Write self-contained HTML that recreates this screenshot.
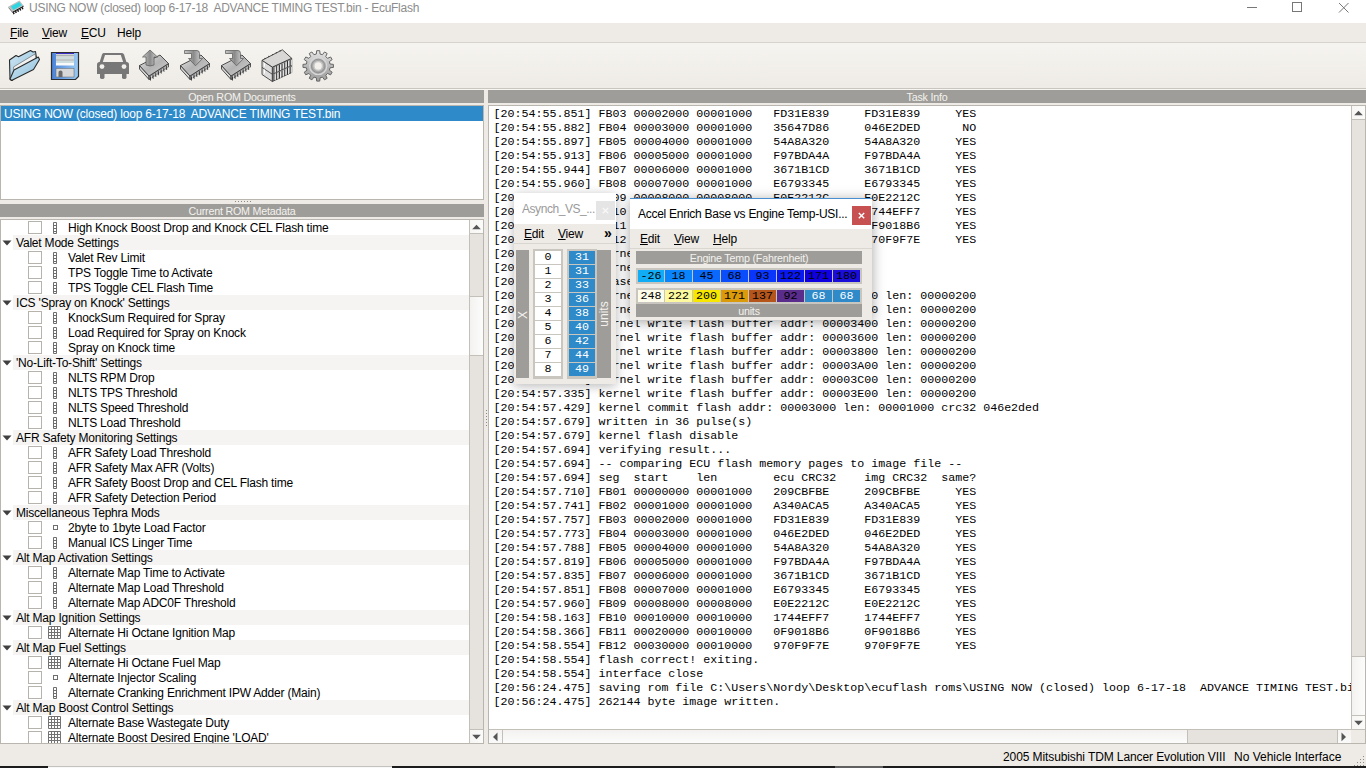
<!DOCTYPE html>
<html><head><meta charset="utf-8"><title>EcuFlash</title><style>
*{margin:0;padding:0;box-sizing:border-box}
html,body{width:1366px;height:768px;overflow:hidden;background:#eeebe6;font-family:"Liberation Sans", sans-serif;font-size:12px;color:#000}
.a{position:absolute}
.t{position:absolute;white-space:pre;line-height:15px;margin-top:1px;letter-spacing:-0.2px}
.mono{font-family:"Liberation Mono", monospace;white-space:pre}
u{text-decoration:none;border-bottom:1px solid currentColor}
</style></head>
<body>
<div class="a" style="left:0;top:0;width:1366px;height:23px;background:#fff"></div><svg class="a" style="left:4px;top:0px" width="24" height="16" viewBox="0 0 24 16">
<path d="M4.5,6.5 L8.5,11.5 L8.5,13 L4.5,8 Z" fill="#777"/>
<path d="M8.5,11.5 L19.5,5.5 L19.5,7 L8.5,13 Z" fill="#222"/>
<path d="M9.3,12.3 l0.8,1.8 M11.5,11.1 l0.8,1.8 M13.7,9.9 l0.8,1.8 M15.9,8.7 l0.8,1.8 M18.1,7.5 l0.8,1.8" stroke="#111" stroke-width="1.4"/>
<path d="M4.5,6.5 L15.5,0.5 L19.5,5.5 L8.5,11.5 Z" fill="#bcc0c0"/>
<path d="M7,6.6 L15.3,2 L17.8,5.3 L9.4,9.9 Z" fill="#2fd6e2"/>
</svg><div class="t" style="left:29px;top:0px;color:#8c8c8c;letter-spacing:-0.27px">USING NOW (closed) loop 6-17-18  ADVANCE TIMING TEST.bin - EcuFlash</div><div class="a" style="left:1247px;top:7px;width:10px;height:1px;background:#777"></div><div class="a" style="left:1292px;top:2px;width:10px;height:10px;border:1px solid #777"></div><svg class="a" style="left:1338px;top:2px" width="11" height="11" viewBox="0 0 11 11"><path d="M1 1L10.5 10.5M10.5 1L1 10.5" stroke="#777" stroke-width="1"/></svg><div class="a" style="left:0;top:23px;width:1366px;height:20px;background:#eeebe6;border-bottom:1px solid #d6d2cc"></div><div class="t" style="left:10px;top:25px"><span style="text-decoration:underline;text-underline-offset:1px">F</span>ile</div><div class="t" style="left:42px;top:25px"><span style="text-decoration:underline;text-underline-offset:1px">V</span>iew</div><div class="t" style="left:81px;top:25px"><span style="text-decoration:underline;text-underline-offset:1px">E</span>CU</div><div class="t" style="left:117px;top:25px">Help</div><div class="a" style="left:0;top:43px;width:1366px;height:45px;background:linear-gradient(#f6f4f0,#eeebe6)"></div><div class="a" style="left:0;top:88px;width:1366px;height:1px;background:#c9c5bf"></div><div class="a" style="left:0;top:89px;width:1366px;height:1px;background:#f7f5f2"></div><div class="a" style="left:0px;top:90px;width:484px;height:13px;background:#9e9d99"></div><div class="t" style="left:0px;top:89px;width:484px;text-align:center;color:#f4f2ee;font-size:10.7px;letter-spacing:-0.2px">Open ROM Documents</div><div class="a" style="left:488px;top:90px;width:878px;height:13px;background:#9e9d99"></div><div class="t" style="left:488px;top:89px;width:878px;text-align:center;color:#f4f2ee;font-size:10.7px;letter-spacing:-0.2px">Task Info</div><div class="a" style="left:0;top:105px;width:484px;height:95px;background:#fff;border:1px solid #b9b5af"></div><div class="a" style="left:1px;top:106px;width:482px;height:15px;background:#2e8ac8"></div><div class="t" style="left:4px;top:106px;color:#fff">USING NOW (closed) loop 6-17-18  ADVANCE TIMING TEST.bin</div><div class="a" style="left:235px;top:201px;width:1px;height:1px;background:#8a8680"></div><div class="a" style="left:238px;top:201px;width:1px;height:1px;background:#8a8680"></div><div class="a" style="left:241px;top:201px;width:1px;height:1px;background:#8a8680"></div><div class="a" style="left:244px;top:201px;width:1px;height:1px;background:#8a8680"></div><div class="a" style="left:247px;top:201px;width:1px;height:1px;background:#8a8680"></div><div class="a" style="left:250px;top:201px;width:1px;height:1px;background:#8a8680"></div><div class="a" style="left:0px;top:204px;width:484px;height:13px;background:#9e9d99"></div><div class="t" style="left:0px;top:203px;width:484px;text-align:center;color:#f4f2ee;font-size:10.7px;letter-spacing:-0.2px">Current ROM Metadata</div><div class="a" style="left:0;top:219px;width:484px;height:525px;background:#fff;border:1px solid #b9b5af"></div><div class="a" style="left:1px;top:220px;width:468px;height:523px;overflow:hidden"><div class="a" style="left:27px;top:1px;width:14px;height:13px;border:1px solid #b6b2ac;background:#fff"></div><svg class="a" style="left:51px;top:1px" width="6" height="14" viewBox="0 0 6 14"><path d="M1.5 1.5h3v11h-3zM1.5 4.5h3M1.5 7.5h3M1.5 10.5h3" fill="none" stroke="#6e6e6e" stroke-width="1"/></svg><div class="t" style="left:67px;top:0px">High Knock Boost Drop and Knock CEL Flash time</div><div class="a" style="left:12px;top:15px;width:456px;height:15px;background:#f5f4f2"></div><svg class="a" style="left:1px;top:20px" width="10" height="6" viewBox="0 0 10 6"><path d="M0.5 0.5H9.5L5 5.5Z" fill="#404040"/></svg><div class="t" style="left:15px;top:15px">Valet Mode Settings</div><div class="a" style="left:27px;top:31px;width:14px;height:13px;border:1px solid #b6b2ac;background:#fff"></div><svg class="a" style="left:51px;top:31px" width="6" height="14" viewBox="0 0 6 14"><path d="M1.5 1.5h3v11h-3zM1.5 4.5h3M1.5 7.5h3M1.5 10.5h3" fill="none" stroke="#6e6e6e" stroke-width="1"/></svg><div class="t" style="left:67px;top:30px">Valet Rev Limit</div><div class="a" style="left:27px;top:46px;width:14px;height:13px;border:1px solid #b6b2ac;background:#fff"></div><svg class="a" style="left:51px;top:46px" width="6" height="14" viewBox="0 0 6 14"><path d="M1.5 1.5h3v11h-3zM1.5 4.5h3M1.5 7.5h3M1.5 10.5h3" fill="none" stroke="#6e6e6e" stroke-width="1"/></svg><div class="t" style="left:67px;top:45px">TPS Toggle Time to Activate</div><div class="a" style="left:27px;top:61px;width:14px;height:13px;border:1px solid #b6b2ac;background:#fff"></div><svg class="a" style="left:51px;top:61px" width="6" height="14" viewBox="0 0 6 14"><path d="M1.5 1.5h3v11h-3zM1.5 4.5h3M1.5 7.5h3M1.5 10.5h3" fill="none" stroke="#6e6e6e" stroke-width="1"/></svg><div class="t" style="left:67px;top:60px">TPS Toggle CEL Flash Time</div><div class="a" style="left:12px;top:75px;width:456px;height:15px;background:#f5f4f2"></div><svg class="a" style="left:1px;top:80px" width="10" height="6" viewBox="0 0 10 6"><path d="M0.5 0.5H9.5L5 5.5Z" fill="#404040"/></svg><div class="t" style="left:15px;top:75px">ICS &#x27;Spray on Knock&#x27; Settings</div><div class="a" style="left:27px;top:91px;width:14px;height:13px;border:1px solid #b6b2ac;background:#fff"></div><svg class="a" style="left:51px;top:91px" width="6" height="14" viewBox="0 0 6 14"><path d="M1.5 1.5h3v11h-3zM1.5 4.5h3M1.5 7.5h3M1.5 10.5h3" fill="none" stroke="#6e6e6e" stroke-width="1"/></svg><div class="t" style="left:67px;top:90px">KnockSum Required for Spray</div><div class="a" style="left:27px;top:106px;width:14px;height:13px;border:1px solid #b6b2ac;background:#fff"></div><svg class="a" style="left:51px;top:106px" width="6" height="14" viewBox="0 0 6 14"><path d="M1.5 1.5h3v11h-3zM1.5 4.5h3M1.5 7.5h3M1.5 10.5h3" fill="none" stroke="#6e6e6e" stroke-width="1"/></svg><div class="t" style="left:67px;top:105px">Load Required for Spray on Knock</div><div class="a" style="left:27px;top:121px;width:14px;height:13px;border:1px solid #b6b2ac;background:#fff"></div><svg class="a" style="left:51px;top:121px" width="6" height="14" viewBox="0 0 6 14"><path d="M1.5 1.5h3v11h-3zM1.5 4.5h3M1.5 7.5h3M1.5 10.5h3" fill="none" stroke="#6e6e6e" stroke-width="1"/></svg><div class="t" style="left:67px;top:120px">Spray on Knock time</div><div class="a" style="left:12px;top:135px;width:456px;height:15px;background:#f5f4f2"></div><svg class="a" style="left:1px;top:140px" width="10" height="6" viewBox="0 0 10 6"><path d="M0.5 0.5H9.5L5 5.5Z" fill="#404040"/></svg><div class="t" style="left:15px;top:135px">&#x27;No-Lift-To-Shift&#x27; Settings</div><div class="a" style="left:27px;top:151px;width:14px;height:13px;border:1px solid #b6b2ac;background:#fff"></div><svg class="a" style="left:51px;top:151px" width="6" height="14" viewBox="0 0 6 14"><path d="M1.5 1.5h3v11h-3zM1.5 4.5h3M1.5 7.5h3M1.5 10.5h3" fill="none" stroke="#6e6e6e" stroke-width="1"/></svg><div class="t" style="left:67px;top:150px">NLTS RPM Drop</div><div class="a" style="left:27px;top:166px;width:14px;height:13px;border:1px solid #b6b2ac;background:#fff"></div><svg class="a" style="left:51px;top:166px" width="6" height="14" viewBox="0 0 6 14"><path d="M1.5 1.5h3v11h-3zM1.5 4.5h3M1.5 7.5h3M1.5 10.5h3" fill="none" stroke="#6e6e6e" stroke-width="1"/></svg><div class="t" style="left:67px;top:165px">NLTS TPS Threshold</div><div class="a" style="left:27px;top:181px;width:14px;height:13px;border:1px solid #b6b2ac;background:#fff"></div><svg class="a" style="left:51px;top:181px" width="6" height="14" viewBox="0 0 6 14"><path d="M1.5 1.5h3v11h-3zM1.5 4.5h3M1.5 7.5h3M1.5 10.5h3" fill="none" stroke="#6e6e6e" stroke-width="1"/></svg><div class="t" style="left:67px;top:180px">NLTS Speed Threshold</div><div class="a" style="left:27px;top:196px;width:14px;height:13px;border:1px solid #b6b2ac;background:#fff"></div><svg class="a" style="left:51px;top:196px" width="6" height="14" viewBox="0 0 6 14"><path d="M1.5 1.5h3v11h-3zM1.5 4.5h3M1.5 7.5h3M1.5 10.5h3" fill="none" stroke="#6e6e6e" stroke-width="1"/></svg><div class="t" style="left:67px;top:195px">NLTS Load Threshold</div><div class="a" style="left:12px;top:210px;width:456px;height:15px;background:#f5f4f2"></div><svg class="a" style="left:1px;top:215px" width="10" height="6" viewBox="0 0 10 6"><path d="M0.5 0.5H9.5L5 5.5Z" fill="#404040"/></svg><div class="t" style="left:15px;top:210px">AFR Safety Monitoring Settings</div><div class="a" style="left:27px;top:226px;width:14px;height:13px;border:1px solid #b6b2ac;background:#fff"></div><svg class="a" style="left:51px;top:226px" width="6" height="14" viewBox="0 0 6 14"><path d="M1.5 1.5h3v11h-3zM1.5 4.5h3M1.5 7.5h3M1.5 10.5h3" fill="none" stroke="#6e6e6e" stroke-width="1"/></svg><div class="t" style="left:67px;top:225px">AFR Safety Load Threshold</div><div class="a" style="left:27px;top:241px;width:14px;height:13px;border:1px solid #b6b2ac;background:#fff"></div><svg class="a" style="left:51px;top:241px" width="6" height="14" viewBox="0 0 6 14"><path d="M1.5 1.5h3v11h-3zM1.5 4.5h3M1.5 7.5h3M1.5 10.5h3" fill="none" stroke="#6e6e6e" stroke-width="1"/></svg><div class="t" style="left:67px;top:240px">AFR Safety Max AFR (Volts)</div><div class="a" style="left:27px;top:256px;width:14px;height:13px;border:1px solid #b6b2ac;background:#fff"></div><svg class="a" style="left:51px;top:256px" width="6" height="14" viewBox="0 0 6 14"><path d="M1.5 1.5h3v11h-3zM1.5 4.5h3M1.5 7.5h3M1.5 10.5h3" fill="none" stroke="#6e6e6e" stroke-width="1"/></svg><div class="t" style="left:67px;top:255px">AFR Safety Boost Drop and CEL Flash time</div><div class="a" style="left:27px;top:271px;width:14px;height:13px;border:1px solid #b6b2ac;background:#fff"></div><svg class="a" style="left:51px;top:271px" width="6" height="14" viewBox="0 0 6 14"><path d="M1.5 1.5h3v11h-3zM1.5 4.5h3M1.5 7.5h3M1.5 10.5h3" fill="none" stroke="#6e6e6e" stroke-width="1"/></svg><div class="t" style="left:67px;top:270px">AFR Safety Detection Period</div><div class="a" style="left:12px;top:285px;width:456px;height:15px;background:#f5f4f2"></div><svg class="a" style="left:1px;top:290px" width="10" height="6" viewBox="0 0 10 6"><path d="M0.5 0.5H9.5L5 5.5Z" fill="#404040"/></svg><div class="t" style="left:15px;top:285px">Miscellaneous Tephra Mods</div><div class="a" style="left:27px;top:301px;width:14px;height:13px;border:1px solid #b6b2ac;background:#fff"></div><div class="a" style="left:52px;top:305px;width:5px;height:5px;border:1px solid #6e6e6e"></div><div class="t" style="left:67px;top:300px">2byte to 1byte Load Factor</div><div class="a" style="left:27px;top:316px;width:14px;height:13px;border:1px solid #b6b2ac;background:#fff"></div><svg class="a" style="left:51px;top:316px" width="6" height="14" viewBox="0 0 6 14"><path d="M1.5 1.5h3v11h-3zM1.5 4.5h3M1.5 7.5h3M1.5 10.5h3" fill="none" stroke="#6e6e6e" stroke-width="1"/></svg><div class="t" style="left:67px;top:315px">Manual ICS Linger Time</div><div class="a" style="left:12px;top:330px;width:456px;height:15px;background:#f5f4f2"></div><svg class="a" style="left:1px;top:335px" width="10" height="6" viewBox="0 0 10 6"><path d="M0.5 0.5H9.5L5 5.5Z" fill="#404040"/></svg><div class="t" style="left:15px;top:330px">Alt Map Activation Settings</div><div class="a" style="left:27px;top:346px;width:14px;height:13px;border:1px solid #b6b2ac;background:#fff"></div><svg class="a" style="left:51px;top:346px" width="6" height="14" viewBox="0 0 6 14"><path d="M1.5 1.5h3v11h-3zM1.5 4.5h3M1.5 7.5h3M1.5 10.5h3" fill="none" stroke="#6e6e6e" stroke-width="1"/></svg><div class="t" style="left:67px;top:345px">Alternate Map Time to Activate</div><div class="a" style="left:27px;top:361px;width:14px;height:13px;border:1px solid #b6b2ac;background:#fff"></div><svg class="a" style="left:51px;top:361px" width="6" height="14" viewBox="0 0 6 14"><path d="M1.5 1.5h3v11h-3zM1.5 4.5h3M1.5 7.5h3M1.5 10.5h3" fill="none" stroke="#6e6e6e" stroke-width="1"/></svg><div class="t" style="left:67px;top:360px">Alternate Map Load Threshold</div><div class="a" style="left:27px;top:376px;width:14px;height:13px;border:1px solid #b6b2ac;background:#fff"></div><svg class="a" style="left:51px;top:376px" width="6" height="14" viewBox="0 0 6 14"><path d="M1.5 1.5h3v11h-3zM1.5 4.5h3M1.5 7.5h3M1.5 10.5h3" fill="none" stroke="#6e6e6e" stroke-width="1"/></svg><div class="t" style="left:67px;top:375px">Alternate Map ADC0F Threshold</div><div class="a" style="left:12px;top:390px;width:456px;height:15px;background:#f5f4f2"></div><svg class="a" style="left:1px;top:395px" width="10" height="6" viewBox="0 0 10 6"><path d="M0.5 0.5H9.5L5 5.5Z" fill="#404040"/></svg><div class="t" style="left:15px;top:390px">Alt Map Ignition Settings</div><div class="a" style="left:27px;top:406px;width:14px;height:13px;border:1px solid #b6b2ac;background:#fff"></div><svg class="a" style="left:47px;top:406px" width="13" height="13" viewBox="0 0 13 13"><path d="M0.5 0.5h12v12h-12zM0.5 3.5h12M0.5 6.5h12M0.5 9.5h12M3.5 0.5v12M6.5 0.5v12M9.5 0.5v12" fill="none" stroke="#737373" stroke-width="1"/></svg><div class="t" style="left:67px;top:405px">Alternate Hi Octane Ignition Map</div><div class="a" style="left:12px;top:420px;width:456px;height:15px;background:#f5f4f2"></div><svg class="a" style="left:1px;top:425px" width="10" height="6" viewBox="0 0 10 6"><path d="M0.5 0.5H9.5L5 5.5Z" fill="#404040"/></svg><div class="t" style="left:15px;top:420px">Alt Map Fuel Settings</div><div class="a" style="left:27px;top:436px;width:14px;height:13px;border:1px solid #b6b2ac;background:#fff"></div><svg class="a" style="left:47px;top:436px" width="13" height="13" viewBox="0 0 13 13"><path d="M0.5 0.5h12v12h-12zM0.5 3.5h12M0.5 6.5h12M0.5 9.5h12M3.5 0.5v12M6.5 0.5v12M9.5 0.5v12" fill="none" stroke="#737373" stroke-width="1"/></svg><div class="t" style="left:67px;top:435px">Alternate Hi Octane Fuel Map</div><div class="a" style="left:27px;top:451px;width:14px;height:13px;border:1px solid #b6b2ac;background:#fff"></div><div class="a" style="left:52px;top:455px;width:5px;height:5px;border:1px solid #6e6e6e"></div><div class="t" style="left:67px;top:450px">Alternate Injector Scaling</div><div class="a" style="left:27px;top:466px;width:14px;height:13px;border:1px solid #b6b2ac;background:#fff"></div><svg class="a" style="left:51px;top:466px" width="6" height="14" viewBox="0 0 6 14"><path d="M1.5 1.5h3v11h-3zM1.5 4.5h3M1.5 7.5h3M1.5 10.5h3" fill="none" stroke="#6e6e6e" stroke-width="1"/></svg><div class="t" style="left:67px;top:465px">Alternate Cranking Enrichment IPW Adder (Main)</div><div class="a" style="left:12px;top:480px;width:456px;height:15px;background:#f5f4f2"></div><svg class="a" style="left:1px;top:485px" width="10" height="6" viewBox="0 0 10 6"><path d="M0.5 0.5H9.5L5 5.5Z" fill="#404040"/></svg><div class="t" style="left:15px;top:480px">Alt Map Boost Control Settings</div><div class="a" style="left:27px;top:496px;width:14px;height:13px;border:1px solid #b6b2ac;background:#fff"></div><svg class="a" style="left:47px;top:496px" width="13" height="13" viewBox="0 0 13 13"><path d="M0.5 0.5h12v12h-12zM0.5 3.5h12M0.5 6.5h12M0.5 9.5h12M3.5 0.5v12M6.5 0.5v12M9.5 0.5v12" fill="none" stroke="#737373" stroke-width="1"/></svg><div class="t" style="left:67px;top:495px">Alternate Base Wastegate Duty</div><div class="a" style="left:27px;top:511px;width:14px;height:13px;border:1px solid #b6b2ac;background:#fff"></div><svg class="a" style="left:47px;top:511px" width="13" height="13" viewBox="0 0 13 13"><path d="M0.5 0.5h12v12h-12zM0.5 3.5h12M0.5 6.5h12M0.5 9.5h12M3.5 0.5v12M6.5 0.5v12M9.5 0.5v12" fill="none" stroke="#737373" stroke-width="1"/></svg><div class="t" style="left:67px;top:510px">Alternate Boost Desired Engine &#x27;LOAD&#x27;</div></div><div class="a" style="left:469px;top:220px;width:14px;height:523px;background:#e6e3df;border-left:1px solid #c3bfb9"></div><div class="a" style="left:470px;top:220px;width:13px;height:14px;background:linear-gradient(90deg,#f7f6f4,#fbfbfa);border-bottom:1px solid #c3bfb9"></div><svg class="a" style="left:472px;top:224px" width="9" height="6" viewBox="0 0 9 6"><path d="M0.2 5.2H8.8L4.5 0.8Z" fill="#555"/></svg><div class="a" style="left:470px;top:729px;width:13px;height:14px;background:linear-gradient(90deg,#f7f6f4,#fbfbfa);border-top:1px solid #c3bfb9"></div><svg class="a" style="left:472px;top:734px" width="9" height="6" viewBox="0 0 9 6"><path d="M0.2 0.8H8.8L4.5 5.2Z" fill="#555"/></svg><div class="a" style="left:470px;top:296px;width:13px;height:60px;background:linear-gradient(90deg,#f3f2f0,#fcfcfc);border-top:1px solid #c3bfb9;border-bottom:1px solid #c3bfb9"></div><div class="a" style="left:488px;top:105px;width:878px;height:639px;background:#fff;border:1px solid #b9b5af"></div><div class="a" style="left:489px;top:106px;width:862px;height:623px;overflow:hidden"><div class="a mono" style="left:4.5px;top:1px;font-size:11.67px;line-height:14px;color:#000">[20:54:55.851] FB03 00002000 00001000   FD31E839     FD31E839     YES
[20:54:55.882] FB04 00003000 00001000   35647D86     046E2DED      NO
[20:54:55.897] FB05 00004000 00001000   54A8A320     54A8A320     YES
[20:54:55.913] FB06 00005000 00001000   F97BDA4A     F97BDA4A     YES
[20:54:55.944] FB07 00006000 00001000   3671B1CD     3671B1CD     YES
[20:54:55.960] FB08 00007000 00001000   E6793345     E6793345     YES
[20:54:55.991] FB09 00008000 00008000   E0E2212C     E0E2212C     YES
[20:54:56.194] FB10 00010000 00010000   1744EFF7     1744EFF7     YES
[20:54:56.397] FB11 00020000 00010000   0F9018B6     0F9018B6     YES
[20:54:56.600] FB12 00030000 00010000   970F9F7E     970F9F7E     YES
[20:54:56.616] kernel flash enable
[20:54:56.631] kernel flash erase
[20:54:56.772] erase complete
[20:54:56.850] kernel write flash buffer addr: 00003000 len: 00000200
[20:54:56.928] kernel write flash buffer addr: 00003200 len: 00000200
[20:54:57.007] kernel write flash buffer addr: 00003400 len: 00000200
[20:54:57.085] kernel write flash buffer addr: 00003600 len: 00000200
[20:54:57.163] kernel write flash buffer addr: 00003800 len: 00000200
[20:54:57.194] kernel write flash buffer addr: 00003A00 len: 00000200
[20:54:57.272] kernel write flash buffer addr: 00003C00 len: 00000200
[20:54:57.335] kernel write flash buffer addr: 00003E00 len: 00000200
[20:54:57.429] kernel commit flash addr: 00003000 len: 00001000 crc32 046e2ded
[20:54:57.679] written in 36 pulse(s)
[20:54:57.679] kernel flash disable
[20:54:57.694] verifying result...
[20:54:57.694] -- comparing ECU flash memory pages to image file --
[20:54:57.694] seg  start    len        ecu CRC32    img CRC32  same?
[20:54:57.710] FB01 00000000 00001000   209CBFBE     209CBFBE     YES
[20:54:57.741] FB02 00001000 00001000   A340ACA5     A340ACA5     YES
[20:54:57.757] FB03 00002000 00001000   FD31E839     FD31E839     YES
[20:54:57.773] FB04 00003000 00001000   046E2DED     046E2DED     YES
[20:54:57.788] FB05 00004000 00001000   54A8A320     54A8A320     YES
[20:54:57.819] FB06 00005000 00001000   F97BDA4A     F97BDA4A     YES
[20:54:57.835] FB07 00006000 00001000   3671B1CD     3671B1CD     YES
[20:54:57.851] FB08 00007000 00001000   E6793345     E6793345     YES
[20:54:57.960] FB09 00008000 00008000   E0E2212C     E0E2212C     YES
[20:54:58.163] FB10 00010000 00010000   1744EFF7     1744EFF7     YES
[20:54:58.366] FB11 00020000 00010000   0F9018B6     0F9018B6     YES
[20:54:58.554] FB12 00030000 00010000   970F9F7E     970F9F7E     YES
[20:54:58.554] flash correct! exiting.
[20:54:58.554] interface close
[20:56:24.475] saving rom file C:\Users\Nordy\Desktop\ecuflash roms\USING NOW (closed) loop 6-17-18  ADVANCE TIMING TEST.bin
[20:56:24.475] 262144 byte image written.</div></div><div class="a" style="left:1351px;top:106px;width:14px;height:623px;background:#e6e3df;border-left:1px solid #c3bfb9"></div><div class="a" style="left:1352px;top:106px;width:13px;height:14px;background:linear-gradient(90deg,#f7f6f4,#fbfbfa);border-bottom:1px solid #c3bfb9"></div><svg class="a" style="left:1354px;top:110px" width="9" height="6" viewBox="0 0 9 6"><path d="M0.2 5.2H8.8L4.5 0.8Z" fill="#555"/></svg><div class="a" style="left:1352px;top:715px;width:13px;height:14px;background:linear-gradient(90deg,#f7f6f4,#fbfbfa);border-top:1px solid #c3bfb9"></div><svg class="a" style="left:1354px;top:720px" width="9" height="6" viewBox="0 0 9 6"><path d="M0.2 0.8H8.8L4.5 5.2Z" fill="#555"/></svg><div class="a" style="left:1352px;top:656px;width:13px;height:60px;background:linear-gradient(90deg,#f3f2f0,#fcfcfc);border-top:1px solid #c3bfb9;border-bottom:1px solid #c3bfb9"></div><div class="a" style="left:489px;top:729px;width:862px;height:14px;background:#e6e3df;border-top:1px solid #c3bfb9"></div><div class="a" style="left:489px;top:730px;width:14px;height:13px;background:linear-gradient(#f4f3f1,#fafafa);border-right:1px solid #c3bfb9"></div><svg class="a" style="left:492px;top:732px" width="6" height="10" viewBox="0 0 6 10"><path d="M5.5 0.6V9.2L1 4.9Z" fill="#555"/></svg><div class="a" style="left:503px;top:730px;width:685px;height:13px;background:linear-gradient(#f3f2f0,#fcfcfc);border-right:1px solid #c3bfb9"></div><div class="a" style="left:1337px;top:730px;width:14px;height:13px;background:linear-gradient(#f4f3f1,#fafafa);border-left:1px solid #c3bfb9"></div><svg class="a" style="left:1341px;top:732px" width="6" height="10" viewBox="0 0 6 10"><path d="M0.5 0.6V9.2L5 4.9Z" fill="#555"/></svg><div class="a" style="left:1351px;top:729px;width:14px;height:14px;background:#eeebe6;border-top:1px solid #c3bfb9"></div><div class="a" style="left:486px;top:410px;width:1px;height:1px;background:#8a8680"></div><div class="a" style="left:486px;top:413px;width:1px;height:1px;background:#8a8680"></div><div class="a" style="left:486px;top:416px;width:1px;height:1px;background:#8a8680"></div><div class="a" style="left:486px;top:419px;width:1px;height:1px;background:#8a8680"></div><div class="a" style="left:486px;top:422px;width:1px;height:1px;background:#8a8680"></div><div class="a" style="left:486px;top:425px;width:1px;height:1px;background:#8a8680"></div><div class="a" style="left:1363px;top:756px;width:1px;height:1px;background:#8e8a84"></div><div class="a" style="left:1360px;top:759px;width:1px;height:1px;background:#8e8a84"></div><div class="a" style="left:1363px;top:759px;width:1px;height:1px;background:#8e8a84"></div><div class="a" style="left:1357px;top:762px;width:1px;height:1px;background:#8e8a84"></div><div class="a" style="left:1360px;top:762px;width:1px;height:1px;background:#8e8a84"></div><div class="a" style="left:1363px;top:762px;width:1px;height:1px;background:#8e8a84"></div><div class="a" style="left:1354px;top:765px;width:1px;height:1px;background:#8e8a84"></div><div class="a" style="left:1357px;top:765px;width:1px;height:1px;background:#8e8a84"></div><div class="a" style="left:1360px;top:765px;width:1px;height:1px;background:#8e8a84"></div><div class="a" style="left:1363px;top:765px;width:1px;height:1px;background:#8e8a84"></div><div class="t" style="left:1003px;top:749px;letter-spacing:-0.1px">2005 Mitsubishi TDM Lancer Evolution VIII</div><div class="t" style="left:1234px;top:749px;letter-spacing:0px">No Vehicle Interface</div><div class="a" style="left:0;top:766px;width:1366px;height:2px;background:#1c1c1c"></div><div class="a" style="left:48px;top:766px;width:344px;height:1px;background:#c4c2bf"></div><div class="a" style="left:48px;top:767px;width:344px;height:1px;background:#f8f8f8"></div><div class="a" style="left:835px;top:766px;width:48px;height:2px;background:#606060"></div><div class="a" style="left:514px;top:193px;width:102px;height:191px;background:#eeebe6;box-shadow:0 2px 10px rgba(0,0,0,0.28)"></div><div class="a" style="left:514px;top:193px;width:102px;height:31px;background:#fff"></div><div class="t" style="left:522px;top:201px;color:#9a9a9a;letter-spacing:-0.45px">Asynch_VS_...</div><div class="a" style="left:596px;top:201px;width:19px;height:19px;background:#e5e5e5"></div><svg class="a" style="left:602px;top:207px" width="7" height="7" viewBox="0 0 7 7"><path d="M0.8 1L6.2 6.2M6.2 1L0.8 6.2" stroke="#f8f8f8" stroke-width="1.2"/></svg><div class="a" style="left:514px;top:243px;width:102px;height:1px;background:#dad6d0"></div><div class="t" style="left:524px;top:226px"><span style="text-decoration:underline">E</span>dit</div><div class="t" style="left:558px;top:226px"><span style="text-decoration:underline">V</span>iew</div><div class="t" style="left:604px;top:225px;font-size:14px;font-weight:bold">&#187;</div><div class="a" style="left:516px;top:250px;width:13px;height:128px;background:#9e9d99"></div><div class="a" style="left:517px;top:305px;width:12px;height:20px;color:#f4f2ee;font-size:12px;line-height:20px;transform:rotate(-90deg);text-align:center">X</div><div class="a" style="left:533px;top:249px;width:30px;height:130px;background:#c9c5bf"></div><div class="a" style="left:567px;top:249px;width:30px;height:130px;background:#c9c5bf"></div><div class="a mono" style="left:535px;top:251px;width:26px;height:13px;background:#fff;text-align:center;font-size:11.67px;line-height:13px">0</div><div class="a mono" style="left:569px;top:251px;width:26px;height:13px;background:#2e8ac8;color:#fff;text-align:center;font-size:11.67px;line-height:13px">31</div><div class="a mono" style="left:535px;top:265px;width:26px;height:13px;background:#fff;text-align:center;font-size:11.67px;line-height:13px">1</div><div class="a mono" style="left:569px;top:265px;width:26px;height:13px;background:#2e8ac8;color:#fff;text-align:center;font-size:11.67px;line-height:13px">31</div><div class="a mono" style="left:535px;top:279px;width:26px;height:13px;background:#fff;text-align:center;font-size:11.67px;line-height:13px">2</div><div class="a mono" style="left:569px;top:279px;width:26px;height:13px;background:#2e8ac8;color:#fff;text-align:center;font-size:11.67px;line-height:13px">33</div><div class="a mono" style="left:535px;top:293px;width:26px;height:13px;background:#fff;text-align:center;font-size:11.67px;line-height:13px">3</div><div class="a mono" style="left:569px;top:293px;width:26px;height:13px;background:#2e8ac8;color:#fff;text-align:center;font-size:11.67px;line-height:13px">36</div><div class="a mono" style="left:535px;top:307px;width:26px;height:13px;background:#fff;text-align:center;font-size:11.67px;line-height:13px">4</div><div class="a mono" style="left:569px;top:307px;width:26px;height:13px;background:#2e8ac8;color:#fff;text-align:center;font-size:11.67px;line-height:13px">38</div><div class="a mono" style="left:535px;top:321px;width:26px;height:13px;background:#fff;text-align:center;font-size:11.67px;line-height:13px">5</div><div class="a mono" style="left:569px;top:321px;width:26px;height:13px;background:#2e8ac8;color:#fff;text-align:center;font-size:11.67px;line-height:13px">40</div><div class="a mono" style="left:535px;top:335px;width:26px;height:13px;background:#fff;text-align:center;font-size:11.67px;line-height:13px">6</div><div class="a mono" style="left:569px;top:335px;width:26px;height:13px;background:#2e8ac8;color:#fff;text-align:center;font-size:11.67px;line-height:13px">42</div><div class="a mono" style="left:535px;top:349px;width:26px;height:13px;background:#fff;text-align:center;font-size:11.67px;line-height:13px">7</div><div class="a mono" style="left:569px;top:349px;width:26px;height:13px;background:#2e8ac8;color:#fff;text-align:center;font-size:11.67px;line-height:13px">44</div><div class="a mono" style="left:535px;top:363px;width:26px;height:13px;background:#fff;text-align:center;font-size:11.67px;line-height:13px">8</div><div class="a mono" style="left:569px;top:363px;width:26px;height:13px;background:#2e8ac8;color:#fff;text-align:center;font-size:11.67px;line-height:13px">49</div><div class="a" style="left:597px;top:250px;width:14px;height:128px;background:#9e9d99"></div><div class="a" style="left:584px;top:307px;width:40px;height:14px;color:#f4f2ee;font-size:12px;line-height:14px;transform:rotate(-90deg);text-align:center">units</div><div class="a" style="left:630px;top:198px;width:242px;height:122px;background:#eeebe6;box-shadow:0 2px 12px rgba(0,0,0,0.36)"></div><div class="a" style="left:630px;top:198px;width:242px;height:31px;background:#fff;border-top:1px solid #4a90d0"></div><div class="t" style="left:638px;top:206px;letter-spacing:-0.27px">Accel Enrich Base vs Engine Temp-USI...</div><div class="a" style="left:852px;top:206px;width:19px;height:19px;background:#c75050"></div><svg class="a" style="left:858px;top:212px" width="7" height="7" viewBox="0 0 7 7"><path d="M0.8 1L6.2 6.2M6.2 1L0.8 6.2" stroke="#fff" stroke-width="1.4"/></svg><div class="a" style="left:630px;top:248px;width:242px;height:1px;background:#dad6d0"></div><div class="t" style="left:640px;top:231px"><span style="text-decoration:underline">E</span>dit</div><div class="t" style="left:674px;top:231px"><span style="text-decoration:underline">V</span>iew</div><div class="t" style="left:713px;top:231px"><span style="text-decoration:underline">H</span>elp</div><div class="a" style="left:636px;top:251px;width:226px;height:13px;background:#9e9d99"></div><div class="t" style="left:636px;top:250px;width:226px;text-align:center;color:#f4f2ee;font-size:10.7px;letter-spacing:-0.2px">Engine Temp (Fahrenheit)</div><div class="a" style="left:636px;top:268px;width:226px;height:16px;background:#c9c5bf"></div><div class="a" style="left:636px;top:288px;width:226px;height:16px;background:#c9c5bf"></div><div class="a mono" style="left:638px;top:270px;width:26px;height:12px;background:#10acf5;text-align:center;font-size:11.67px;line-height:12px">-26</div><div class="a mono" style="left:638px;top:290px;width:26px;height:12px;background:#fdfbea;color:#000;text-align:center;font-size:11.67px;line-height:12px">248</div><div class="a mono" style="left:665px;top:270px;width:27px;height:12px;background:#0a84fb;text-align:center;font-size:11.67px;line-height:12px">18</div><div class="a mono" style="left:665px;top:290px;width:27px;height:12px;background:#fdf99e;color:#000;text-align:center;font-size:11.67px;line-height:12px">222</div><div class="a mono" style="left:693px;top:270px;width:27px;height:12px;background:#0a68fb;text-align:center;font-size:11.67px;line-height:12px">45</div><div class="a mono" style="left:693px;top:290px;width:27px;height:12px;background:#f7e600;color:#000;text-align:center;font-size:11.67px;line-height:12px">200</div><div class="a mono" style="left:721px;top:270px;width:27px;height:12px;background:#0a4efb;text-align:center;font-size:11.67px;line-height:12px">68</div><div class="a mono" style="left:721px;top:290px;width:27px;height:12px;background:#db9a0a;color:#000;text-align:center;font-size:11.67px;line-height:12px">171</div><div class="a mono" style="left:749px;top:270px;width:27px;height:12px;background:#0a36fb;text-align:center;font-size:11.67px;line-height:12px">93</div><div class="a mono" style="left:749px;top:290px;width:27px;height:12px;background:#b4561c;color:#000;text-align:center;font-size:11.67px;line-height:12px">137</div><div class="a mono" style="left:777px;top:270px;width:27px;height:12px;background:#0a18f0;text-align:center;font-size:11.67px;line-height:12px">122</div><div class="a mono" style="left:777px;top:290px;width:27px;height:12px;background:#5a2d8c;color:#000;text-align:center;font-size:11.67px;line-height:12px">92</div><div class="a mono" style="left:805px;top:270px;width:27px;height:12px;background:#1000e0;text-align:center;font-size:11.67px;line-height:12px">171</div><div class="a mono" style="left:805px;top:290px;width:27px;height:12px;background:#2e8ac8;color:#fff;text-align:center;font-size:11.67px;line-height:12px">68</div><div class="a mono" style="left:833px;top:270px;width:27px;height:12px;background:#1a0ed8;text-align:center;font-size:11.67px;line-height:12px">180</div><div class="a mono" style="left:833px;top:290px;width:27px;height:12px;background:#2e8ac8;color:#fff;text-align:center;font-size:11.67px;line-height:12px">68</div><div class="a" style="left:636px;top:304px;width:226px;height:13px;background:#9e9d99"></div><div class="t" style="left:636px;top:303px;width:226px;text-align:center;color:#f4f2ee;font-size:10.7px;letter-spacing:-0.2px">units</div><svg class="a" style="left:0;top:43px" width="340" height="45" viewBox="0 43 340 45"><defs>
<linearGradient id="fb" x1="0" y1="0" x2="1" y2="1"><stop offset="0" stop-color="#cfe6f3"/><stop offset="1" stop-color="#8fc0dc"/></linearGradient>
<linearGradient id="fl" x1="0" y1="0" x2="1" y2="0"><stop offset="0" stop-color="#4a82d8"/><stop offset="1" stop-color="#9ccbf2"/></linearGradient>
<linearGradient id="cg" x1="0" y1="0" x2="1" y2="1"><stop offset="0" stop-color="#e4e4e4"/><stop offset="0.5" stop-color="#b4b4b4"/><stop offset="1" stop-color="#d0d0d0"/></linearGradient>
<linearGradient id="ag" x1="0" y1="0" x2="1" y2="0"><stop offset="0" stop-color="#c8c8c8"/><stop offset="0.5" stop-color="#8a8a8a"/><stop offset="1" stop-color="#d8d8d8"/></linearGradient>
<radialGradient id="gg" cx="0.4" cy="0.3" r="0.8"><stop offset="0" stop-color="#e8e8e8"/><stop offset="1" stop-color="#9a9a9a"/></radialGradient>
</defs><path d="M9.5,60 L16,55.5 L18.5,56.8 L30.5,50.5 L33,52 L35.5,51.5 L36.5,58 L12,80.5 L10,79 Z" fill="url(#fb)" stroke="#2a2a2a" stroke-width="1.1" stroke-linejoin="round"/><path d="M13.5,67 L35,54 L36,58.5 L14.5,75 Z" fill="#f2f2f2" stroke="#555" stroke-width="0.6"/><path d="M11.5,80.5 L33.5,69.5 L39.5,59.5 L38.3,57 L14,70 L10,79 Z" fill="url(#fb)" stroke="#2a2a2a" stroke-width="1.1" stroke-linejoin="round"/><path d="M51.5,52.5 H78.5 V76.5 L75.5,79.5 H51.5 Z" fill="url(#fl)" stroke="#2e2e2e" stroke-width="1.2"/><rect x="56" y="53" width="18" height="12" fill="#d4d4d4"/><rect x="56" y="53" width="18" height="1" fill="#3a2ec8"/><rect x="56" y="55" width="18" height="1" fill="#a8b4b4"/><rect x="56" y="57.5" width="18" height="1" fill="#c8e4e4"/><rect x="56" y="59.5" width="18" height="1" fill="#b0b8b8"/><rect x="56" y="61.5" width="18" height="1" fill="#c8e8e8"/><rect x="56" y="63" width="18" height="2.5" fill="#fafafa"/><rect x="56" y="68.5" width="18" height="8.5" fill="#d8d8d8" stroke="#666" stroke-width="0.5"/><path d="M58.5,77 V72 Q58.5,70.5 60.5,70.5 Q62.5,70.5 62.5,72 V77 Z" fill="#6a6a6a"/><path d="M103.5,53 H122 Q123.5,53 124,54.5 L126.5,62.5 H99.5 L102,54.5 Q102.5,53 103.5,53 Z" fill="#777"/><path d="M105,55 H120.8 L123.3,62.5 H102.7 Z" fill="#f3f0eb"/><path d="M97,74 V64.5 Q97,62 99.5,62 H126.5 Q129,62 129,64.5 V74 Z" fill="#777"/><circle cx="102" cy="66.6" r="2.4" fill="#f3f0eb"/><circle cx="124" cy="66.6" r="2.4" fill="#f3f0eb"/><path d="M100,73 H104.5 V77.5 Q104.5,79 102.25,79 Q100,79 100,77.5 Z" fill="#777"/><path d="M122,73 H126.5 V77.5 Q126.5,79 124.25,79 Q122,79 122,77.5 Z" fill="#777"/><g transform="translate(0,0)"><path d="M139.5,65.5 L149,76 L149,79.5 L139.5,69 Z" fill="#d6d6d6" stroke="#3c3c3c" stroke-width="0.9" stroke-linejoin="round"/><path d="M149,76 L168.5,63.5 L168.5,67 L149,79.5 Z" fill="#9a9a9a" stroke="#3c3c3c" stroke-width="0.9" stroke-linejoin="round"/><path d="M150.50,76.50 v4" stroke="#333" stroke-width="0.9"/><path d="M151.50,75.90 v4" stroke="#eee" stroke-width="0.7"/><path d="M153.20,74.75 v4" stroke="#333" stroke-width="0.9"/><path d="M154.20,74.15 v4" stroke="#eee" stroke-width="0.7"/><path d="M155.90,73.00 v4" stroke="#333" stroke-width="0.9"/><path d="M156.90,72.40 v4" stroke="#eee" stroke-width="0.7"/><path d="M158.60,71.25 v4" stroke="#333" stroke-width="0.9"/><path d="M159.60,70.65 v4" stroke="#eee" stroke-width="0.7"/><path d="M161.30,69.50 v4" stroke="#333" stroke-width="0.9"/><path d="M162.30,68.90 v4" stroke="#eee" stroke-width="0.7"/><path d="M164.00,67.75 v4" stroke="#333" stroke-width="0.9"/><path d="M165.00,67.15 v4" stroke="#eee" stroke-width="0.7"/><path d="M166.70,66.00 v4" stroke="#333" stroke-width="0.9"/><path d="M167.70,65.40 v4" stroke="#eee" stroke-width="0.7"/><path d="M139.5,65.5 L160,55 L168.5,63.5 L149,76 Z" fill="url(#cg)" stroke="#3c3c3c" stroke-width="0.9" stroke-linejoin="round"/><path d="M150,50 L157.5,57 H154 V65 Q150,67 146,65 V57 H142.5 Z" fill="url(#ag)" stroke="#555" stroke-width="0.7"/></g><g transform="translate(41,0)"><path d="M139.5,65.5 L149,76 L149,79.5 L139.5,69 Z" fill="#d6d6d6" stroke="#3c3c3c" stroke-width="0.9" stroke-linejoin="round"/><path d="M149,76 L168.5,63.5 L168.5,67 L149,79.5 Z" fill="#9a9a9a" stroke="#3c3c3c" stroke-width="0.9" stroke-linejoin="round"/><path d="M150.50,76.50 v4" stroke="#333" stroke-width="0.9"/><path d="M151.50,75.90 v4" stroke="#eee" stroke-width="0.7"/><path d="M153.20,74.75 v4" stroke="#333" stroke-width="0.9"/><path d="M154.20,74.15 v4" stroke="#eee" stroke-width="0.7"/><path d="M155.90,73.00 v4" stroke="#333" stroke-width="0.9"/><path d="M156.90,72.40 v4" stroke="#eee" stroke-width="0.7"/><path d="M158.60,71.25 v4" stroke="#333" stroke-width="0.9"/><path d="M159.60,70.65 v4" stroke="#eee" stroke-width="0.7"/><path d="M161.30,69.50 v4" stroke="#333" stroke-width="0.9"/><path d="M162.30,68.90 v4" stroke="#eee" stroke-width="0.7"/><path d="M164.00,67.75 v4" stroke="#333" stroke-width="0.9"/><path d="M165.00,67.15 v4" stroke="#eee" stroke-width="0.7"/><path d="M166.70,66.00 v4" stroke="#333" stroke-width="0.9"/><path d="M167.70,65.40 v4" stroke="#eee" stroke-width="0.7"/><path d="M139.5,65.5 L160,55 L168.5,63.5 L149,76 Z" fill="url(#cg)" stroke="#3c3c3c" stroke-width="0.9" stroke-linejoin="round"/><path d="M143.5,50.5 H156 Q158.5,50.5 158.5,53.5 V58.5 H161.5 L154.5,65.8 L147.5,58.5 H150.5 V53.5 H143.5 Z" fill="url(#ag)" stroke="#555" stroke-width="0.7"/></g><g transform="translate(82,0)"><path d="M139.5,65.5 L149,76 L149,79.5 L139.5,69 Z" fill="#d6d6d6" stroke="#3c3c3c" stroke-width="0.9" stroke-linejoin="round"/><path d="M149,76 L168.5,63.5 L168.5,67 L149,79.5 Z" fill="#9a9a9a" stroke="#3c3c3c" stroke-width="0.9" stroke-linejoin="round"/><path d="M150.50,76.50 v4" stroke="#333" stroke-width="0.9"/><path d="M151.50,75.90 v4" stroke="#eee" stroke-width="0.7"/><path d="M153.20,74.75 v4" stroke="#333" stroke-width="0.9"/><path d="M154.20,74.15 v4" stroke="#eee" stroke-width="0.7"/><path d="M155.90,73.00 v4" stroke="#333" stroke-width="0.9"/><path d="M156.90,72.40 v4" stroke="#eee" stroke-width="0.7"/><path d="M158.60,71.25 v4" stroke="#333" stroke-width="0.9"/><path d="M159.60,70.65 v4" stroke="#eee" stroke-width="0.7"/><path d="M161.30,69.50 v4" stroke="#333" stroke-width="0.9"/><path d="M162.30,68.90 v4" stroke="#eee" stroke-width="0.7"/><path d="M164.00,67.75 v4" stroke="#333" stroke-width="0.9"/><path d="M165.00,67.15 v4" stroke="#eee" stroke-width="0.7"/><path d="M166.70,66.00 v4" stroke="#333" stroke-width="0.9"/><path d="M167.70,65.40 v4" stroke="#eee" stroke-width="0.7"/><path d="M139.5,65.5 L160,55 L168.5,63.5 L149,76 Z" fill="url(#cg)" stroke="#3c3c3c" stroke-width="0.9" stroke-linejoin="round"/><path d="M143.5,50.5 H156 Q158.5,50.5 158.5,53.5 V58.5 H161.5 L154.5,65.8 L147.5,58.5 H150.5 V53.5 H143.5 Z" fill="url(#ag)" stroke="#555" stroke-width="0.7"/></g><path d="M262,60.3 L272.4,67.1 L272.4,81.5 L262,74.5 Z" fill="#dcdcdc" stroke="#3c3c3c" stroke-width="0.9" stroke-linejoin="round"/><path d="M262,67.4 L272.4,74.3" stroke="#444" stroke-width="0.9"/><path d="M264.5,62.5 v4 M264.5,69.5 v4" stroke="#fff" stroke-width="1"/><path d="M272.4,67.1 L291.7,58.3 L291.7,72.5 L272.4,81.5 Z" fill="#b8b8b8" stroke="#3c3c3c" stroke-width="0.9" stroke-linejoin="round"/><path d="M274.00,67.30 v6.5" stroke="#2e2e2e" stroke-width="1"/><path d="M275.20,67.30 v6" stroke="#f4f4f4" stroke-width="0.9"/><path d="M276.70,66.05 v6.5" stroke="#2e2e2e" stroke-width="1"/><path d="M277.90,66.05 v6" stroke="#f4f4f4" stroke-width="0.9"/><path d="M279.40,64.80 v6.5" stroke="#2e2e2e" stroke-width="1"/><path d="M280.60,64.80 v6" stroke="#f4f4f4" stroke-width="0.9"/><path d="M282.10,63.55 v6.5" stroke="#2e2e2e" stroke-width="1"/><path d="M283.30,63.55 v6" stroke="#f4f4f4" stroke-width="0.9"/><path d="M284.80,62.30 v6.5" stroke="#2e2e2e" stroke-width="1"/><path d="M286.00,62.30 v6" stroke="#f4f4f4" stroke-width="0.9"/><path d="M287.50,61.05 v6.5" stroke="#2e2e2e" stroke-width="1"/><path d="M288.70,61.05 v6" stroke="#f4f4f4" stroke-width="0.9"/><path d="M290.20,59.80 v6.5" stroke="#2e2e2e" stroke-width="1"/><path d="M291.40,59.80 v6" stroke="#f4f4f4" stroke-width="0.9"/><path d="M274.00,74.30 v6.5" stroke="#2e2e2e" stroke-width="1"/><path d="M275.20,74.30 v6" stroke="#f4f4f4" stroke-width="0.9"/><path d="M276.70,73.05 v6.5" stroke="#2e2e2e" stroke-width="1"/><path d="M277.90,73.05 v6" stroke="#f4f4f4" stroke-width="0.9"/><path d="M279.40,71.80 v6.5" stroke="#2e2e2e" stroke-width="1"/><path d="M280.60,71.80 v6" stroke="#f4f4f4" stroke-width="0.9"/><path d="M282.10,70.55 v6.5" stroke="#2e2e2e" stroke-width="1"/><path d="M283.30,70.55 v6" stroke="#f4f4f4" stroke-width="0.9"/><path d="M284.80,69.30 v6.5" stroke="#2e2e2e" stroke-width="1"/><path d="M286.00,69.30 v6" stroke="#f4f4f4" stroke-width="0.9"/><path d="M287.50,68.05 v6.5" stroke="#2e2e2e" stroke-width="1"/><path d="M288.70,68.05 v6" stroke="#f4f4f4" stroke-width="0.9"/><path d="M290.20,66.80 v6.5" stroke="#2e2e2e" stroke-width="1"/><path d="M291.40,66.80 v6" stroke="#f4f4f4" stroke-width="0.9"/><path d="M272.4,74.3 L291.7,65.4" stroke="#444" stroke-width="0.8"/><path d="M262,60.3 L282.4,49.8 L291.7,58.3 L272.4,67.1 Z" fill="#d9d7d5" stroke="#3c3c3c" stroke-width="0.9" stroke-linejoin="round"/><circle cx="265.00" cy="58.50" r="0.7" fill="#444"/><circle cx="268.80" cy="56.55" r="0.7" fill="#444"/><circle cx="272.60" cy="54.60" r="0.7" fill="#444"/><circle cx="276.40" cy="52.65" r="0.7" fill="#444"/><circle cx="280.20" cy="50.70" r="0.7" fill="#444"/><defs><linearGradient id="gg2" x1="0" y1="0" x2="0" y2="1"><stop offset="0" stop-color="#e6e6e6"/><stop offset="0.6" stop-color="#b0b0b0"/><stop offset="1" stop-color="#a0a0a0"/></linearGradient></defs><path d="M316.32,54.05 L316.68,50.68 L319.72,50.68 L320.08,54.05 L322.50,54.70 L324.50,51.96 L327.13,53.48 L325.75,56.57 L327.53,58.35 L330.62,56.97 L332.14,59.60 L329.40,61.60 L330.05,64.02 L333.42,64.38 L333.42,67.42 L330.05,67.78 L329.40,70.20 L332.14,72.20 L330.62,74.83 L327.53,73.45 L325.75,75.23 L327.13,78.32 L324.50,79.84 L322.50,77.10 L320.08,77.75 L319.72,81.12 L316.68,81.12 L316.32,77.75 L313.90,77.10 L311.90,79.84 L309.27,78.32 L310.65,75.23 L308.87,73.45 L305.78,74.83 L304.26,72.20 L307.00,70.20 L306.35,67.78 L302.98,67.42 L302.98,64.38 L306.35,64.02 L307.00,61.60 L304.26,59.60 L305.78,56.97 L308.87,58.35 L310.65,56.57 L309.27,53.48 L311.90,51.96 L313.90,54.70 Z" fill="url(#gg2)" stroke="#666" stroke-width="1" stroke-linejoin="round"/><circle cx="318.2" cy="65.9" r="8.6" fill="none" stroke="#d8d8d8" stroke-width="1.2"/><circle cx="318.2" cy="65.9" r="6.8" fill="#a8a8a8" stroke="#8a8a8a" stroke-width="0.8"/><circle cx="318.2" cy="65.9" r="4.3" fill="#f3f0eb" stroke="#c8c8c8" stroke-width="1.4"/></svg>
</body></html>
